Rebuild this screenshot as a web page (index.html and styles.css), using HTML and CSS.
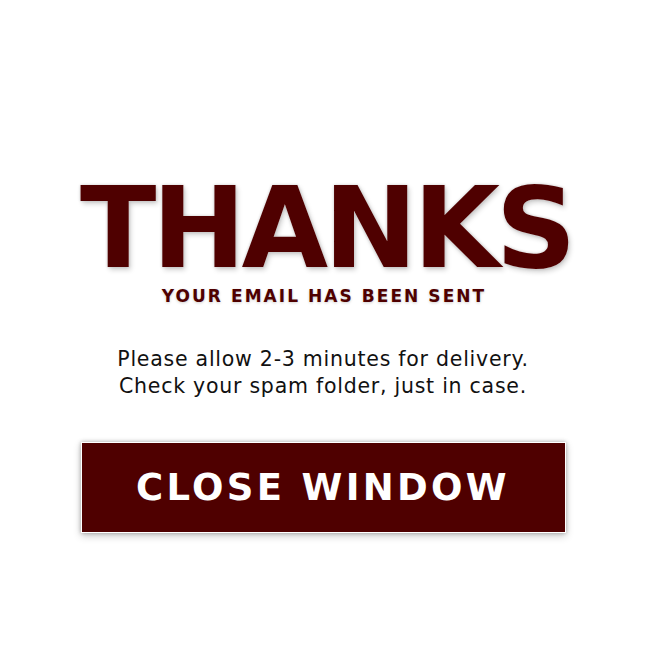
FILE: index.html
```html
<!DOCTYPE html>
<html>
<head>
<meta charset="utf-8">
<link rel="stylesheet" href="styles.css">
</head>
<body>
<main class="page">
  <h1 class="title">THANKS</h1>
  <p class="subtitle">YOUR EMAIL HAS BEEN SENT</p>
  <p class="note">Please allow 2-3 minutes for delivery.<br>Check your spam folder, just in case.</p>
  <button class="close">CLOSE WINDOW</button>
</main>
</body>
</html>
```
FILE: styles.css
```css
html, body {
  margin: 0;
  padding: 0;
  background: #ffffff;
}
.page {
  width: 646px;
  height: 646px;
  display: flex;
  flex-direction: column;
  align-items: center;
  font-family: "DejaVu Sans", sans-serif;
}
.title {
  margin: 178px 0 0 0;
  height: 100px;
  font-size: 112px;
  line-height: 100px;
  font-weight: 700;
  letter-spacing: -4.3px;
  padding-left: 6px;
  color: #4f0000;
  text-shadow: 0 0 1px #fff, 0 0 3px rgba(0,0,0,0.22), 2px 3px 5px rgba(0,0,0,0.18);
}
.subtitle {
  margin: 10px 0 0 0;
  font-size: 17px;
  line-height: 1;
  font-weight: 700;
  letter-spacing: 2.05px;
  padding-left: 2px;
  color: #4f0000;
  text-shadow: 0 1px 3px rgba(0,0,0,0.2);
}
.note {
  margin: 41px 0 0 0;
  font-size: 20.5px;
  line-height: 27px;
  letter-spacing: 0.75px;
  text-align: center;
  color: #111111;
}
.close {
  margin-top: 42px;
  width: 485px;
  height: 91px;
  border: 1px solid #ffffff;
  background: #4f0000;
  color: #ffffff;
  font-family: "DejaVu Sans", sans-serif;
  font-size: 37px;
  font-weight: 700;
  letter-spacing: 3.3px;
  box-shadow: 0 0 4px rgba(0,0,0,0.3), 0 3px 8px rgba(0,0,0,0.2);
  padding: 0;
  cursor: pointer;
}
```
